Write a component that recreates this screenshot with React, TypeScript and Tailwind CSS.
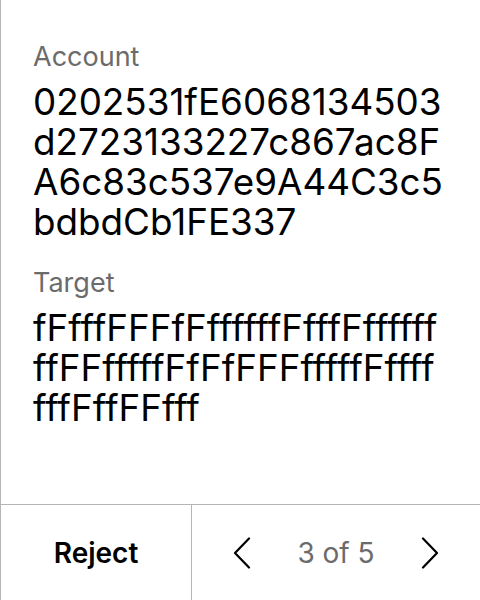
import { Fragment } from "react";

const accountLines = ["0202531fE6068134503", "d2723133227c867ac8F", "A6c83c537e9A44C3c5", "bdbdCb1FE337"];
const targetLines = ["fFfffFFFfFffffffFfffFffffff", "ffFFfffffFfFfFFFfffffFffff", "fffFffFFfff"];

function Field({ label, lines }: { label: string; lines: string[] }) {
  return (
    <div className="flex flex-col">
      <div className="text-[27px] leading-[32px] text-[#6b6b6b]">{label}</div>
      <p className="mt-[9px] text-[36.8px] leading-[40px] text-black whitespace-nowrap">
        {lines.map((line, i) => (
          <Fragment key={line}>
            {i > 0 && <br />}
            {line}
          </Fragment>
        ))}
      </p>
    </div>
  );
}

function Chevron({ dir }: { dir: "left" | "right" }) {
  return (
    <svg width="18" height="32" viewBox="0 0 18 32" fill="none" stroke="black" strokeWidth="2.2" strokeLinecap="round" strokeLinejoin="round">
      {dir === "left" ? <polyline points="16,1.5 2,16 16,30.5" /> : <polyline points="2,1.5 16,16 2,30.5" />}
    </svg>
  );
}

export default function App() {
  return (
    <div
      className="h-[600px] w-[480px] flex flex-col bg-white border-l border-[#b5b5b5]"
      style={{ fontFamily: "Inter, 'Noto Sans', sans-serif" }}
    >
      {/* Details */}
      <div className="flex-1 flex flex-col gap-[25px] pl-8 pt-[41px]">
        <Field label="Account" lines={accountLines} />
        <Field label="Target" lines={targetLines} />
      </div>

      {/* Footer */}
      <div className="h-[96px] flex border-t border-[#b5b5b5]">
        <button className="w-[191px] flex items-center justify-center border-r border-[#b5b5b5] text-[28px] font-semibold text-black">
          Reject
        </button>
        <div className="flex-1 flex items-center justify-between px-[41px]">
          <Chevron dir="left" />
          <span className="text-[28px] text-[#6b6b6b]">3 of 5</span>
          <Chevron dir="right" />
        </div>
      </div>
    </div>
  );
}
